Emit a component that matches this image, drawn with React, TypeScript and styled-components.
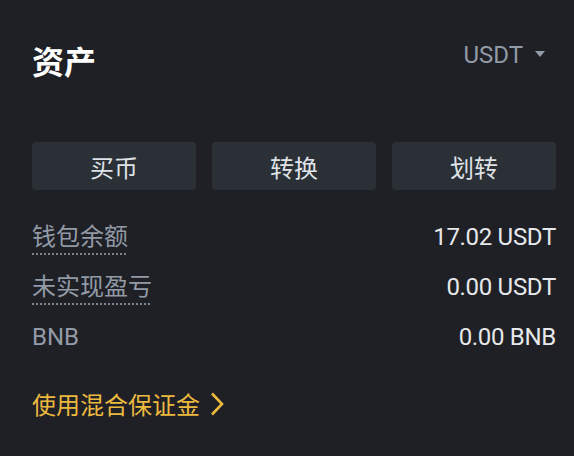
import React from "react";
import styled, { createGlobalStyle } from "styled-components";

const Global = createGlobalStyle`
  html, body {
    margin: 0;
    padding: 0;
    background: #1f2026;
  }
  body {
    font-family: Roboto, "Noto Sans CJK SC", sans-serif;
  }
`;

const Panel = styled.div`
  width: 574px;
  height: 456px;
  box-sizing: border-box;
  padding: 44px 18px 0 32px;
  background: #1f2026;
  display: flex;
  flex-direction: column;
`;

const Header = styled.div`
  display: flex;
  justify-content: space-between;
  align-items: flex-start;
  height: 32px;
`;

const Title = styled.h2`
  margin: 0;
  font-size: 32px;
  line-height: 32px;
  font-weight: 700;
  color: #ffffff;
  font-family: "Noto Sans CJK SC", sans-serif;
`;

const CurrencySelect = styled.div`
  display: flex;
  align-items: center;
  gap: 12px;
  padding-right: 11px;
  font-size: 24px;
  line-height: 24px;
  color: #929aa5;
  margin-top: -1px;
`;

const Caret = styled.span`
  width: 0;
  height: 0;
  border-left: 5px solid transparent;
  border-right: 5px solid transparent;
  border-top: 6px solid #929aa5;
  margin-top: -2px;
`;

const Actions = styled.div`
  display: grid;
  grid-template-columns: repeat(3, 1fr);
  gap: 16px;
  margin-top: 66px;
`;

const ActionButton = styled.button`
  height: 48px;
  border: none;
  border-radius: 4px;
  background: #2b2f36;
  color: #dfe2e6;
  font-family: "Noto Sans CJK SC", sans-serif;
  font-size: 24px;
  font-weight: 400;
  padding: 0;
  cursor: pointer;
`;

const Rows = styled.div`
  margin-top: 22px;
  display: flex;
  flex-direction: column;
`;

const Row = styled.div`
  height: 50px;
  display: flex;
  justify-content: space-between;
  align-items: center;
`;

const Label = styled.span<{ $dotted?: boolean }>`
  font-size: 24px;
  line-height: 32px;
  color: #929aa5;
  padding-bottom: ${(p) => (p.$dotted ? "2px" : "0")};
  margin-bottom: ${(p) => (p.$dotted ? "-2px" : "0")};
  background-image: ${(p) =>
    p.$dotted
      ? "repeating-linear-gradient(to right, #7d8590 0 2px, transparent 2px 4px)"
      : "none"};
  background-size: 100% 2px;
  background-position: left bottom;
  background-repeat: no-repeat;
`;

const Value = styled.span`
  font-size: 24px;
  line-height: 32px;
  letter-spacing: -0.3px;
  color: #e6e8ea;
`;

const MarginLink = styled.a`
  margin-top: 26px;
  display: inline-flex;
  align-items: center;
  gap: 10px;
  align-self: flex-start;
  font-family: "Noto Sans CJK SC", sans-serif;
  font-size: 24px;
  line-height: 32px;
  color: #ecb93f;
  text-decoration: none;
  cursor: pointer;
`;

const Chevron = () => (
  <svg width="14" height="24" viewBox="0 0 14 24" fill="none">
    <polyline
      points="2,1.5 12,12 2,22.5"
      stroke="#ecb93f"
      strokeWidth="2.6"
      strokeLinejoin="miter"
    />
  </svg>
);

const rows = [
  { label: "钱包余额", value: "17.02 USDT", dotted: true },
  { label: "未实现盈亏", value: "0.00 USDT", dotted: true },
  { label: "BNB", value: "0.00 BNB", dotted: false },
];

export default function App() {
  return (
    <>
      <Global />
      <Panel>
        <Header>
          <Title>资产</Title>
          <CurrencySelect>
            USDT
            <Caret />
          </CurrencySelect>
        </Header>
        <Actions>
          <ActionButton>买币</ActionButton>
          <ActionButton>转换</ActionButton>
          <ActionButton>划转</ActionButton>
        </Actions>
        <Rows>
          {rows.map((r) => (
            <Row key={r.label}>
              <Label $dotted={r.dotted}>{r.label}</Label>
              <Value>{r.value}</Value>
            </Row>
          ))}
        </Rows>
        <MarginLink>
          使用混合保证金
          <Chevron />
        </MarginLink>
      </Panel>
    </>
  );
}
